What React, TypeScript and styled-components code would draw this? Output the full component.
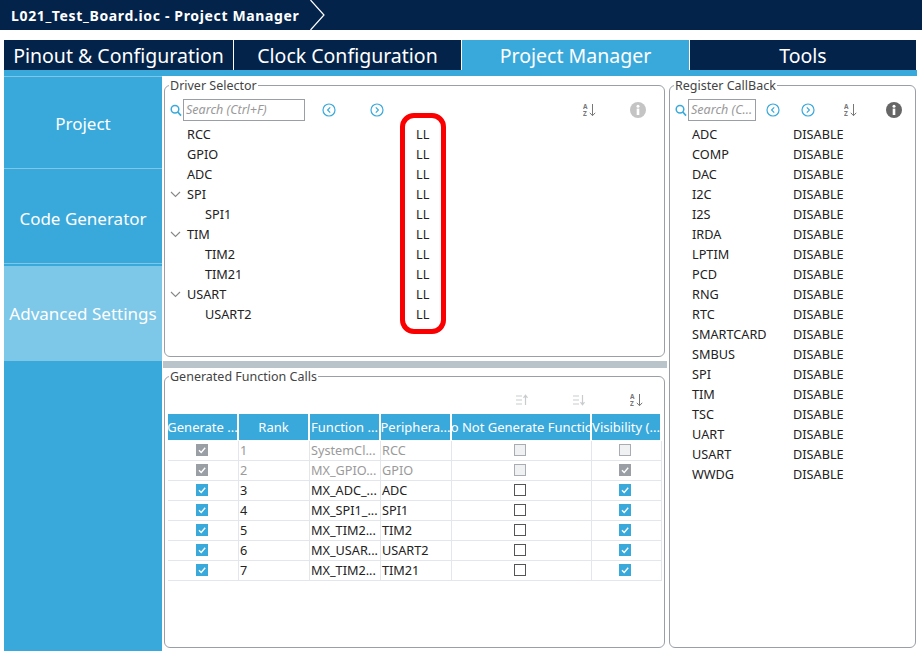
import React from 'react';
import styled, { createGlobalStyle } from 'styled-components';

const navy = '#03234b';
const blue = '#39a9dc';
const paleBlue = '#7dc7e9';

const GlobalStyle = createGlobalStyle`
  html, body {
    margin: 0;
    padding: 0;
    background: #fff;
    font-family: "Noto Sans", "Open Sans", sans-serif;
    color: #222;
  }
  * {
    box-sizing: border-box;
  }
`;

const Page = styled.div`
  width: 922px;
  height: 656px;
  overflow: hidden;
`;

const TitleBar = styled.header`
  height: 30px;
  background: ${navy};
  display: flex;
  align-items: center;
  padding-left: 11px;
  gap: 10px;
  color: #fff;
  font-size: 14px;
  letter-spacing: 0.65px;
  font-weight: 700;
`;

const TabBar = styled.nav`
  display: flex;
  height: 30px;
  margin: 10px 5px 0 4px;
`;

const Tab = styled.div<{ $w: number; $active?: boolean }>`
  width: ${(p) => p.$w}px;
  flex: none;
  background: ${(p) => (p.$active ? blue : navy)};
  border-right: 1px solid #fff;
  color: #fff;
  font-size: 19.5px;
  line-height: 32px;
  text-align: center;
  overflow: hidden;
  white-space: nowrap;
`;

const Strip = styled.div`
  height: 6px;
  margin: 0 5px 0 4px;
  background: ${blue};
`;

const Body = styled.div`
  display: flex;
  height: 575px;
  margin-left: 4px;
`;

const Sidebar = styled.aside`
  width: 158px;
  flex: none;
  background: ${blue};
  display: flex;
  flex-direction: column;
`;

const SideItem = styled.div`
  display: flex;
  align-items: center;
  justify-content: center;
  color: #fff;
  font-size: 17px;
  white-space: nowrap;
`;

const ProjectItem = styled(SideItem)`
  height: 92px;
  padding-top: 1px;
  border-top: 1px solid ${paleBlue};
`;

const GeneratorItem = styled(SideItem)`
  height: 96px;
  padding-top: 4px;
  border-top: 1px solid ${paleBlue};
  border-bottom: 1px solid ${paleBlue};
`;

const AdvancedItem = styled(SideItem)`
  height: 95px;
  margin-top: 2px;
  padding-bottom: 1px;
  background: ${paleBlue};
`;

const Content = styled.main`
  flex: none;
  width: 756px;
  display: grid;
  grid-template-columns: 501px 247px;
  column-gap: 4px;
  margin-left: 2px;
  padding-top: 2px;
`;

const LeftColumn = styled.div`
  display: flex;
  flex-direction: column;
  height: 570px;
`;

const Panel = styled.fieldset<{ $h: number }>`
  position: relative;
  height: ${(p) => p.$h}px;
  min-width: 0;
  margin: 0;
  padding: 0;
  border: 1px solid #9a9fa5;
  border-radius: 6px;
`;

const Legend = styled.legend`
  margin-left: 4px;
  padding: 0 1px;
  font-size: 12.5px;
  line-height: 15px;
  color: #444;
`;

const Splitter = styled.div`
  height: 7px;
  margin: 4px -2px 1px -1px;
  background: #b9c4ca;
`;

const Toolbar = styled.div`
  display: flex;
  align-items: center;
  height: 22px;
  margin-top: 6px;
  padding-left: 5px;
`;

const SearchBox = styled.div<{ $w: number }>`
  width: ${(p) => p.$w}px;
  height: 22px;
  margin-left: 1px;
  padding-left: 2px;
  border: 1px solid #9a9fa5;
  color: #999;
  font-size: 12.5px;
  font-style: italic;
  line-height: 20px;
  white-space: nowrap;
  overflow: hidden;
`;

const ToolIcon = styled.span<{ $ml: number }>`
  display: inline-flex;
  margin-left: ${(p) => p.$ml}px;
`;

const RowList = styled.div<{ $top: number }>`
  margin-top: ${(p) => p.$top}px;
`;

const TreeRow = styled.div<{ $columns: string }>`
  display: grid;
  grid-template-columns: ${(p) => p.$columns};
  height: 20px;
  align-items: center;
  font-size: 12.7px;
  color: #222;
  white-space: nowrap;
`;

const TreeName = styled.div<{ $indent: number }>`
  display: flex;
  align-items: center;
  padding-left: ${(p) => p.$indent}px;
`;

const Caret = styled.svg`
  width: 11px;
  height: 7px;
  margin-right: 6px;
`;

const DriverHighlight = styled.div`
  position: absolute;
  left: 235px;
  top: 20px;
  width: 46px;
  height: 221px;
  border: 5px solid #fa0000;
  border-radius: 14px;
`;

const SortBar = styled.div`
  display: flex;
  justify-content: flex-end;
  align-items: center;
  height: 20px;
  margin-top: 6px;
  padding-right: 20px;
  gap: 44px;
`;

const Table = styled.div`
  margin: 4px 3px 0 3px;
  display: grid;
  grid-template-columns: 71px 71px 71px 71px 140px 70px;
  font-size: 12.7px;
`;

const HeadCell = styled.div`
  height: 26px;
  margin-right: 2px;
  margin-bottom: 1px;
  background: ${blue};
  color: #fff;
  line-height: 26px;
  font-size: 13px;
  padding: 0 1px;
  display: flex;
  justify-content: center;
  white-space: nowrap;
  overflow: hidden;
`;

const Cell = styled.div<{ $muted?: boolean; $center?: boolean }>`
  height: 20px;
  line-height: 18px;
  padding-left: ${(p) => (p.$center ? 0 : 1)}px;
  padding-right: ${(p) => (p.$center ? 3 : 0)}px;
  padding-bottom: ${(p) => (p.$center ? 1 : 0)}px;
  border-right: 1px solid #e3e6ea;
  border-bottom: 1px solid #e3e6ea;
  color: ${(p) => (p.$muted ? '#9a9a9a' : '#222')};
  overflow: hidden;
  white-space: nowrap;
  display: ${(p) => (p.$center ? 'flex' : 'block')};
  align-items: center;
  justify-content: center;
`;

const CheckBox = styled.span<{ $checked?: boolean; $muted?: boolean }>`
  width: 12px;
  height: 12px;
  display: inline-flex;
  align-items: center;
  justify-content: center;
  background: ${(p) =>
    p.$checked ? (p.$muted ? '#9a9fa5' : blue) : p.$muted ? '#f0f1f3' : '#fff'};
  border: 1px solid
    ${(p) => (p.$checked ? 'transparent' : p.$muted ? '#a9adb2' : '#555')};
`;

const Tick = () => (
  <svg width="10" height="10" viewBox="0 0 10 10">
    <path d="M2 5.2 L4.2 7.4 L8.2 2.8" fill="none" stroke="#fff" strokeWidth="1.4" />
  </svg>
);

const Check = ({ checked, muted }: { checked?: boolean; muted?: boolean }) => (
  <CheckBox $checked={checked} $muted={muted}>
    {checked && <Tick />}
  </CheckBox>
);

const SearchIcon = () => (
  <svg width="12" height="13" viewBox="0 0 12 13">
    <circle cx="5" cy="5.2" r="3.8" fill="none" stroke={blue} strokeWidth="1.5" />
    <path d="M7.8 8 L11 11.6" stroke={blue} strokeWidth="1.7" />
  </svg>
);

const ArrowCircle = ({ dir }: { dir: 'left' | 'right' }) => (
  <svg width="14" height="14" viewBox="0 0 14 14">
    <circle cx="7" cy="7" r="6" fill="none" stroke={blue} strokeWidth="1.2" />
    <path
      d={dir === 'left' ? 'M8.2 4.4 L5.6 7 L8.2 9.6' : 'M5.8 4.4 L8.4 7 L5.8 9.6'}
      fill="none"
      stroke={blue}
      strokeWidth="1.2"
    />
  </svg>
);

const InfoIcon = ({ color }: { color: string }) => (
  <svg width="16" height="16" viewBox="0 0 16 16">
    <circle cx="8" cy="8" r="8" fill={color} />
    <circle cx="8" cy="4.2" r="1.5" fill="#fff" />
    <rect x="6.7" y="6.6" width="2.6" height="6.4" fill="#fff" />
  </svg>
);

const AzIcon = () => (
  <svg width="14" height="14" viewBox="0 0 14 14">
    <text x="0" y="6" fontSize="6.5" fontWeight="700" fill="#777" fontFamily="Noto Sans">
      A
    </text>
    <text x="0" y="13" fontSize="6.5" fontWeight="700" fill="#777" fontFamily="Noto Sans">
      Z
    </text>
    <path d="M9.5 1 V12.5 M6.8 9.8 L9.5 12.7 L12.2 9.8" fill="none" stroke="#777" strokeWidth="1" />
  </svg>
);

const ListSortIcon = ({ up }: { up?: boolean }) => (
  <svg width="13" height="12" viewBox="0 0 13 12">
    <path d="M0 2 H6 M0 6 H6 M0 10 H6" stroke="#c9cccf" strokeWidth="1.2" />
    <path
      d={up ? 'M9.5 11 V1.5 M7.5 3.8 L9.5 1.2 L11.5 3.8' : 'M9.5 1 V10.5 M7.5 8.2 L9.5 10.8 L11.5 8.2'}
      fill="none"
      stroke="#c9cccf"
      strokeWidth="1.2"
    />
  </svg>
);

const drivers = [
  { name: 'RCC', indent: 22 },
  { name: 'GPIO', indent: 22 },
  { name: 'ADC', indent: 22 },
  { name: 'SPI', indent: 5, open: true },
  { name: 'SPI1', indent: 40 },
  { name: 'TIM', indent: 5, open: true },
  { name: 'TIM2', indent: 40 },
  { name: 'TIM21', indent: 40 },
  { name: 'USART', indent: 5, open: true },
  { name: 'USART2', indent: 40 },
];

const callbacks = [
  'ADC', 'COMP', 'DAC', 'I2C', 'I2S', 'IRDA', 'LPTIM', 'PCD', 'RNG', 'RTC',
  'SMARTCARD', 'SMBUS', 'SPI', 'TIM', 'TSC', 'UART', 'USART', 'WWDG',
];

const calls = [
  { rank: 1, fn: 'SystemCl...', periph: 'RCC', muted: true, skipMuted: true, visible: false, visMuted: true },
  { rank: 2, fn: 'MX_GPIO...', periph: 'GPIO', muted: true, skipMuted: true, visible: true, visMuted: true },
  { rank: 3, fn: 'MX_ADC_...', periph: 'ADC' },
  { rank: 4, fn: 'MX_SPI1_...', periph: 'SPI1' },
  { rank: 5, fn: 'MX_TIM2...', periph: 'TIM2' },
  { rank: 6, fn: 'MX_USAR...', periph: 'USART2' },
  { rank: 7, fn: 'MX_TIM2...', periph: 'TIM21' },
];

const headers = ['Generate ...', 'Rank', 'Function ...', 'Periphera...', 'Do Not Generate Function', 'Visibility (...'];

function App() {
  return (
    <Page>
      <GlobalStyle />
      <TitleBar>
        L021_Test_Board.ioc - Project Manager
        <svg width="15" height="30" viewBox="0 0 15 30">
          <path d="M0.5 0 L14 15 L0.5 30" fill="none" stroke="#fff" strokeWidth="1.2" />
        </svg>
      </TitleBar>
      <TabBar>
        <Tab $w={230}>Pinout &amp; Configuration</Tab>
        <Tab $w={228}>Clock Configuration</Tab>
        <Tab $w={228} $active>Project Manager</Tab>
        <Tab $w={227}>Tools</Tab>
      </TabBar>
      <Strip />
      <Body>
        <Sidebar>
          <ProjectItem>Project</ProjectItem>
          <GeneratorItem>Code Generator</GeneratorItem>
          <AdvancedItem>Advanced Settings</AdvancedItem>
        </Sidebar>
        <Content>
          <LeftColumn>
            <Panel $h={279}>
              <Legend>Driver Selector</Legend>
              <Toolbar>
                <SearchIcon />
                <SearchBox $w={122}>Search (Ctrl+F)</SearchBox>
                <ToolIcon $ml={17}><ArrowCircle dir="left" /></ToolIcon>
                <ToolIcon $ml={34}><ArrowCircle dir="right" /></ToolIcon>
                <ToolIcon $ml={199}><AzIcon /></ToolIcon>
                <ToolIcon $ml={33}><InfoIcon color="#c4c4c4" /></ToolIcon>
              </Toolbar>
              <RowList $top={3}>
                {drivers.map((d) => (
                  <TreeRow key={d.name} $columns="251px 1fr">
                    <TreeName $indent={d.indent}>
                      {d.open && (
                        <Caret viewBox="0 0 11 7">
                          <path d="M1 1 L5.5 5.5 L10 1" fill="none" stroke="#888" strokeWidth="1.1" />
                        </Caret>
                      )}
                      {d.name}
                    </TreeName>
                    <div>LL</div>
                  </TreeRow>
                ))}
              </RowList>
              <DriverHighlight />
            </Panel>
            <Splitter />
            <Panel $h={279}>
              <Legend>Generated Function Calls</Legend>
              <SortBar>
                <ListSortIcon up />
                <ListSortIcon />
                <AzIcon />
              </SortBar>
              <Table>
                {headers.map((h) => (
                  <HeadCell key={h}>{h}</HeadCell>
                ))}
                {calls.map((c) => (
                  <React.Fragment key={c.rank}>
                    <Cell $center><Check checked muted={c.muted} /></Cell>
                    <Cell $muted={c.muted}>{c.rank}</Cell>
                    <Cell $muted={c.muted}>{c.fn}</Cell>
                    <Cell $muted={c.muted}>{c.periph}</Cell>
                    <Cell $center><Check muted={c.skipMuted} /></Cell>
                    <Cell $center><Check checked={c.visible ?? true} muted={c.visMuted} /></Cell>
                  </React.Fragment>
                ))}
              </Table>
            </Panel>
          </LeftColumn>
          <Panel $h={570}>
            <Legend>Register CallBack</Legend>
            <Toolbar>
              <SearchIcon />
              <SearchBox $w={68}>Search (C...</SearchBox>
              <ToolIcon $ml={10}><ArrowCircle dir="left" /></ToolIcon>
              <ToolIcon $ml={21}><ArrowCircle dir="right" /></ToolIcon>
              <ToolIcon $ml={29}><AzIcon /></ToolIcon>
              <ToolIcon $ml={28}><InfoIcon color="#666" /></ToolIcon>
            </Toolbar>
            <RowList $top={3}>
              {callbacks.map((name) => (
                <TreeRow key={name} $columns="123px 1fr">
                  <TreeName $indent={22}>{name}</TreeName>
                  <div>DISABLE</div>
                </TreeRow>
              ))}
            </RowList>
          </Panel>
        </Content>
      </Body>
    </Page>
  );
}

export default App;
